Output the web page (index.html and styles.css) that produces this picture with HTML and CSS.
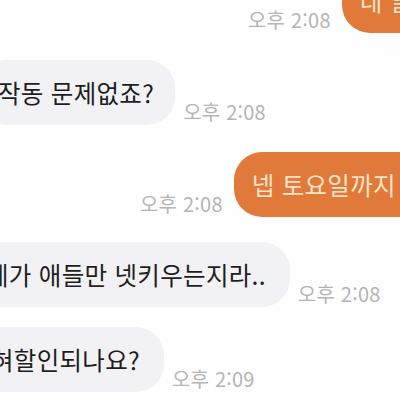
FILE: index.html
```html
<!DOCTYPE html>
<html lang="ko">
<head>
<meta charset="utf-8">
<link rel="stylesheet" href="styles.css">
</head>
<body>
<div class="chat">
  <div class="row out first">
    <span class="time">오후 2:08</span>
    <div class="bubble mine">네 알겠습니다</div>
  </div>
  <div class="row in r1">
    <div class="bubble theirs">작동 문제없죠?</div>
    <span class="time">오후 2:08</span>
  </div>
  <div class="row out r2">
    <span class="time">오후 2:08</span>
    <div class="bubble mine">넵 토요일까지</div>
  </div>
  <div class="row in r3">
    <div class="bubble theirs">제가 애들만 넷키우는지라..</div>
    <span class="time">오후 2:08</span>
  </div>
  <div class="row in r4">
    <div class="bubble theirs">혀할인되나요?</div>
    <span class="time">오후 2:09</span>
  </div>
</div>
</body>
</html>
```

FILE: styles.css
```css
html, body {
  margin: 0;
  padding: 0;
  background: #fefefe;
  width: 400px;
  height: 400px;
  overflow: hidden;
}

.chat {
  display: flex;
  flex-direction: column;
  font-family: "Noto Sans CJK KR", "Noto Sans", sans-serif;
}

.row {
  display: flex;
  align-items: flex-end;
  white-space: nowrap;
}

.first { margin-top: -32px; padding-left: 248px; }
.r1 { margin-top: 27px; }
.r2 { margin-top: 27px; padding-left: 140px; }
.r3 { margin-top: 25px; }
.r4 { margin-top: 20px; }

.bubble {
  flex-shrink: 0;
  font-size: 24.5px;
  line-height: 31px;
  letter-spacing: 0.3px;
  padding: 17px 24px 17px 20px;
  border-radius: 28px;
}

.mine {
  background: #e0793a;
  color: #fbe4c6;
  margin-left: 11px;
  padding-left: 18px;
  padding-right: 40px;
}

.theirs {
  background: #f2f2f5;
  color: #1e1e1e;
  margin-right: 8px;
}

.r1 .theirs { margin-left: -22px; padding-right: 21px; }
.r3 .theirs { margin-left: -34px; }
.r4 .theirs { margin-left: -29px; }

.time {
  flex-shrink: 0;
  font-size: 20px;
  line-height: 22px;
  letter-spacing: 0.2px;
  color: #b4b4b4;
  padding-bottom: 2px;
}
```
